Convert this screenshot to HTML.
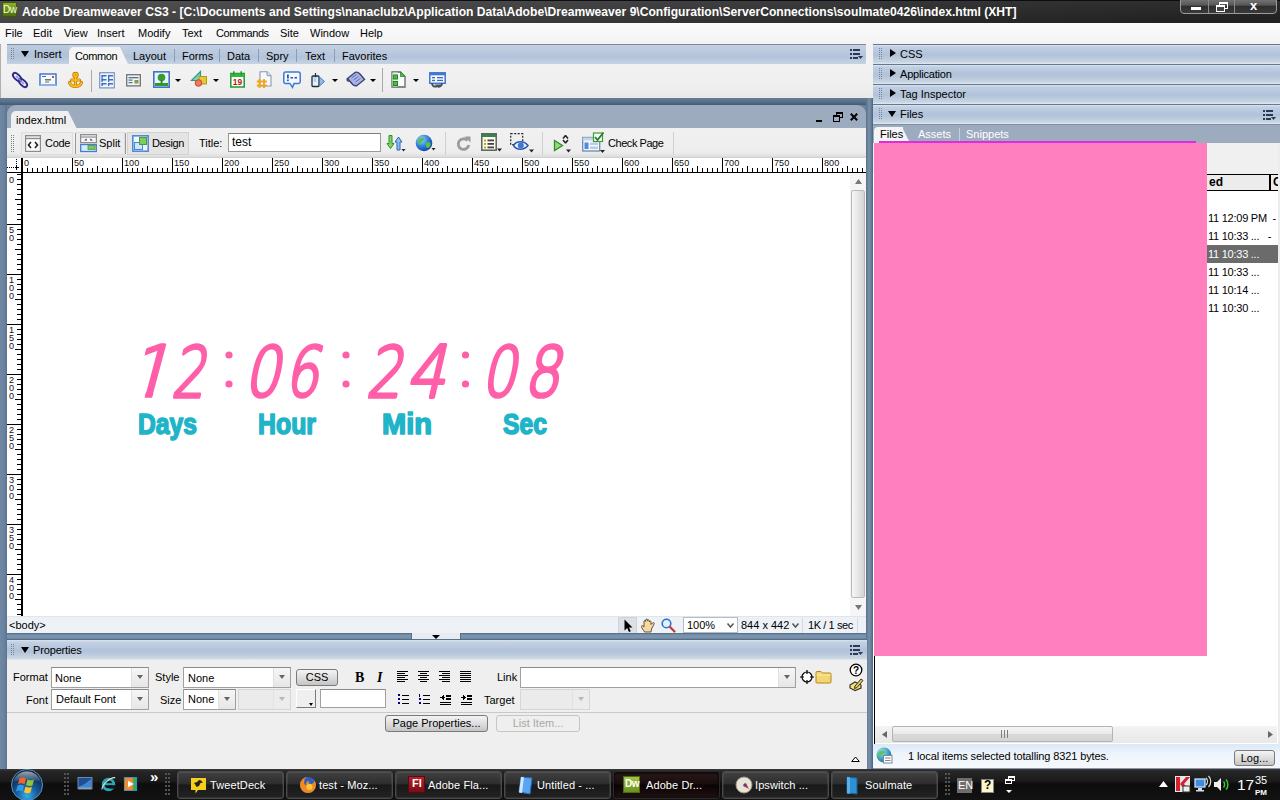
<!DOCTYPE html>
<html><head><meta charset="utf-8"><title>test</title>
<style>
*{box-sizing:border-box;margin:0;padding:0}
html,body{width:1280px;height:800px;overflow:hidden}
body{position:relative;background:#6a829d;font-family:"Liberation Sans",sans-serif;font-size:11px;color:#000;line-height:13px}
.a{position:absolute}
.t{position:absolute;white-space:nowrap;line-height:13px}
svg{position:absolute;overflow:visible}
.grip{position:absolute;width:4px;background-image:radial-gradient(circle at 0.5px 0.5px,#76859a 0.6px,transparent 0.7px);background-size:2px 2px}
.tri-d{position:absolute;width:0;height:0;border-left:4.5px solid transparent;border-right:4.5px solid transparent;border-top:6px solid #000}
.tri-r{position:absolute;width:0;height:0;border-top:4.5px solid transparent;border-bottom:4.5px solid transparent;border-left:6px solid #000}
.dd{position:absolute;width:0;height:0;border-left:3px solid transparent;border-right:3px solid transparent;border-top:3px solid #000}
.vsep{position:absolute;width:1px;background:#a9a9a9}

#band1{left:0;top:98px;width:873px;height:7px;background:linear-gradient(#677d97,#5a718b 50%,#435a75)}
#band2{left:0;top:633px;width:873px;height:7px;background:linear-gradient(#4f657f 0,#64809b 1px,#7a93af 2px,#7a93af 5px,#61788f 6px,#4d637d 7px)}
#vsepr{left:866px;top:98px;width:7px;height:672px;background:linear-gradient(90deg,#5b728c,#7990aa 45%,#6a819c 70%,#4d647e)}
#lstrip{left:0;top:105px;width:7px;height:665px;background:linear-gradient(90deg,#6f88a4,#6a829d 60%,#5a7490)}
/* title bar */
#titlebar{left:0;top:0;width:1280px;height:23px;background:linear-gradient(#0c0c18 0,#0c0c18 1px,rgba(255,255,255,.05) 1px,rgba(0,0,0,.06) 23px),linear-gradient(90deg,#484848,#3d3d3d 40%,#292929 75%,#202020)}
#titletext{left:22px;top:5px;color:#fff;font-weight:bold;font-size:12.12px;line-height:15px}
#dwicon{left:2px;top:2px;width:15px;height:15px;background:linear-gradient(#8fb02c,#4f6d10);border:1px solid #41580c;color:#f4ffd8;font-size:10px;font-weight:normal;line-height:14px;text-align:center;letter-spacing:-0.5px}
#winctl{left:1180px;top:-2px;width:97px;height:16px;border:1px solid #9a9a9a;border-radius:0 0 4px 4px;background:linear-gradient(#777,#555 45%,#2e2e2e 50%,#3a3a3a)}
#winctl i{position:absolute;top:0;width:1px;height:14px;background:#8a8a8a}
#menubar{left:0;top:23px;width:1280px;height:21px;background:linear-gradient(#fbfbfb,#f3f3f3)}
#menubar .t{top:4px}
/* insert bar */
#insertbar{left:0;top:44px;width:873px;border-left:1px solid #b0b0b0;height:54px;background:linear-gradient(#f2f2f2 20px,#efefef 42px,#e9e9e9)}
#inserttabs{left:6px;top:0;width:859px;height:20px;background:linear-gradient(#7b8b9f 0,#7b8b9f 1px,#c4d1e3 1px,#b3c4da 65%,#c6d3e3)}
#insertlbl{left:0;top:1px;width:62px;height:18px;background:linear-gradient(#bdcce0,#b0c1d8 60%,#c0cee0)}
#commontab{left:62px;top:3px;width:51px;height:17px;background:#f4f4f4;border-radius:5px 0 0 0}
#commontab:after{content:"";position:absolute;right:-8px;top:0;width:0;height:0;border-bottom:17px solid #f4f4f4;border-right:8px solid transparent}
.tabsep{position:absolute;top:5px;width:1px;height:13px;background:#8d9db3}
#inserttabs .t{top:6px}
/* document window */
#doc{left:7px;top:105px;width:859px;height:528px;background:#9dabbf;border-radius:9px 9px 0 0;overflow:hidden}
#doctab{left:4px;top:6px;width:57px;height:18px;background:#efefef;border-radius:5px 0 0 0}
#doctab:after{content:"";position:absolute;right:-9px;top:0;width:0;height:0;border-bottom:18px solid #efefef;border-right:9px solid transparent}
#doctool{left:0;top:23px;width:860px;height:30px;background:linear-gradient(#f1f1f1,#ededed 80%,#e2e2e2 93%,#cfcfcf)}
.tbtn{position:absolute;top:4px;height:23px;border:1px solid #dedede;background:#ececec}
.tbtn.on{background:#e4e4e4;border-color:#d2d2d2}
#doctool .t{top:9px;font-size:11px;line-height:13px}
#titleinp{left:221px;top:5px;width:153px;height:19px;background:#fff;border:1px solid #9a9a9a;border-top-color:#7d7d7d}
#hruler{left:0;top:53px;width:860px;height:15px;background:#fff}
#vruler{left:0;top:68px;width:15px;height:443px;background:#fff}
.rl{position:absolute;font-size:9.7px;line-height:9px;color:#111;transform:scaleX(.94);transform-origin:0 0}
#canvas{left:16px;top:68px;width:828px;height:443px;background:#fff}
#vscroll{left:843px;top:68px;width:17px;height:443px;background:#f5f5f5}
#vthumb{left:1px;top:17px;width:14px;height:408px;background:linear-gradient(90deg,#f7f7f7,#e6e6e6 50%,#d3d3d3);border:1px solid #b9b9b9;border-radius:2px}
#docstatus{left:0;top:511px;width:860px;height:17px;background:#eef2f7;border-top:1px solid #dfe5ee}
#docstatus .t{top:2px;font-size:11px}
#hticks{left:15px;top:0;width:845px;height:14px;background:
 linear-gradient(90deg,#000 1px,transparent 1px) 0 0/50px 14px repeat-x,
 linear-gradient(90deg,#000 1px,transparent 1px) 0 8px/25px 6px repeat-x,
 linear-gradient(90deg,#000 1px,transparent 1px) 0 10px/5px 4px repeat-x}
#hline{left:0;top:14px;width:860px;height:1px;background:#000}
#hvline{left:14px;top:0;width:2px;height:15px;background:#000}
#vticks{left:0;top:1px;width:14px;height:442px;background:
 linear-gradient(#000 1px,transparent 1px) 0 0/14px 50px repeat-y,
 linear-gradient(#000 1px,transparent 1px) 8px 0/6px 25px repeat-y,
 linear-gradient(#000 1px,transparent 1px) 10px 0/4px 5px repeat-y}
#vline{left:14px;top:0;width:2px;height:443px;background:#000}
/* properties */
#props{left:7px;top:640px;width:860px;height:130px;background:#efefef}
#propshead{left:0;top:0;width:860px;height:20px;background:linear-gradient(#dbe4ef 0,#c3d1e3 2px,#b0c2d9 11px,#c8d4e3 18px,#e4eaf1 20px)}
#props .t{font-size:11px}
.sel{position:absolute;height:21px;background:#fff;border:1px solid #a0a0a0;border-top-color:#8a8a8a}
.sel:after{content:"";position:absolute;right:0;top:0;width:16px;height:19px;background:linear-gradient(#f6f6f6,#e6e6e6);border-left:1px solid #e0e0e0}
.sel:before{content:"";position:absolute;right:5px;top:7px;width:0;height:0;border-left:3px solid transparent;border-right:3px solid transparent;border-top:4px solid #666;z-index:2}
.sel.dis{background:#ebebeb;border-color:#d6d6d6}
.sel.dis:after{background:#ececec;border-left-color:#e2e2e2}
.sel.dis:before{border-top-color:#b8b8b8}
.btn{position:absolute;height:17px;border:1px solid #7a7a7a;border-radius:3px;background:linear-gradient(#f4f4f4,#dcdcdc 55%,#c4c4c4);text-align:center;font-size:11px;line-height:15px}
.btn.dis{border-color:#c6c6c6;background:#efefef;color:#a8a8a8}
.inp{position:absolute;background:#fff;border:1px solid #a0a0a0;border-top-color:#8a8a8a}
#propsline{left:0;top:72px;width:860px;height:1px;background:#c9c9c9}
/* right panels */
#right{left:873px;top:44px;width:407px;height:725px;background:#fff}
.phead{position:absolute;left:0;width:408px;height:20px;background:linear-gradient(#66788f 0,#66788f 1px,#dbe4ef 1px,#c1cfe2 3px,#b0c2d9 11px,#c8d4e3 18px,#e2e9f1 20px)}
.phead .t{left:27px;top:4px}
#ftabs{left:0;top:80px;width:408px;height:19px;background:linear-gradient(#7d8da3 0,#7d8da3 1px,#9dabbf 1px)}
#ftab{left:1px;top:3px;width:29px;height:16px;background:#f4f4f4;border-radius:4px 0 0 0}
#ftab:after{content:"";position:absolute;right:-7px;top:0;width:0;height:0;border-bottom:16px solid #f4f4f4;border-right:8px solid transparent}
#ftabs .t{top:4px}
#fbar{left:0;top:99px;width:408px;height:31px;background:#f0f0f0}
#fcolhead{left:2px;top:130px;width:403px;height:17px;background:#ececec;border-top:1px solid #000;border-bottom:1px solid #000}
#magenta{left:879px;top:141px;width:317px;height:2px;background:#e12be0}
#pink{left:874px;top:143px;width:333px;height:513px;background:#ff7fbf}
.frow{position:absolute;left:334px;width:71px;height:18px}
.frow .t{left:1px;top:3px;font-size:11px;letter-spacing:-0.25px}
#fsel{background:#6b6b6b;color:#fff}
#hscroll{left:2px;top:682px;width:402px;height:17px;background:linear-gradient(#f3f3f3,#ededed 50%,#e8e8e8)}
#hthumb{left:17px;top:0px;width:221px;height:16px;border:1px solid #b4b4b4;border-radius:2px;background:linear-gradient(#f6f6f6,#eaeaea 48%,#d9d9d9 52%,#d4d4d4)}
#fstatus{left:0;top:700px;width:408px;height:25px;background:linear-gradient(#dbe8f5,#eef4fb 40%,#f5f9fd);border-bottom:1px solid #8b97a6}
/* taskbar */
#taskbar{left:0;top:769px;width:1280px;height:31px;background:linear-gradient(#3d3d3d 0,#262626 2px,#1b1b1b 12px,#0d0d0d 15px,#121212 31px);font-family:"Liberation Sans",sans-serif}
.tb{position:absolute;top:2px;width:107px;height:28px;border:1px solid #4a4a4a;border-radius:3px;background:linear-gradient(#414141,#2d2d2d 45%,#191919 50%,#222);box-shadow:inset 0 0 0 1px rgba(255,255,255,.08)}
.tb .t{left:32px;top:7px;color:#fff;font-size:11px;line-height:13px;letter-spacing:0.1px}
.tb.act{background:linear-gradient(#2a1a1a,#1a0d0d 45%,#0b0404 50%,#1f1010);border-color:#2a2a2a;box-shadow:inset 0 1px 3px #000}
.dots{position:absolute;width:5px;height:24px;top:4px;background-image:radial-gradient(circle at 1px 1px,#555 0.700px,transparent 0.900px);background-size:3px 4px}
</style></head><body>
<div class="a" id="titlebar">
 <div class="a" id="dwicon">Dw</div>
 <div class="t" id="titletext">Adobe Dreamweaver CS3 - [C:\Documents and Settings\nanaclubz\Application Data\Adobe\Dreamweaver 9\Configuration\ServerConnections\soulmate0426\index.html (XHT]</div>
 <div class="a" id="winctl"><i style="left:27px"></i><i style="left:53px"></i>
  <div class="a" style="left:10px;top:8px;width:10px;height:3px;background:#fff"></div>
  <div class="a" style="left:38px;top:3px;width:9px;height:7px;border:1.5px solid #fff;border-top-width:2px"></div>
  <div class="a" style="left:35px;top:6px;width:9px;height:7px;border:1.5px solid #fff;border-top-width:2px;background:#444"></div>
  <div class="t" style="left:69px;top:0px;color:#fff;font-weight:bold;font-size:13px;line-height:14px">x</div>
 </div>
</div>
<div class="a" id="menubar">
<div class="t" style="left:5px">File</div><div class="t" style="left:33px">Edit</div><div class="t" style="left:64px">View</div><div class="t" style="left:97px">Insert</div><div class="t" style="left:138px">Modify</div><div class="t" style="left:182px">Text</div><div class="t" style="left:216px;letter-spacing:-0.45px">Commands</div><div class="t" style="left:280px">Site</div><div class="t" style="left:310px">Window</div><div class="t" style="left:360px">Help</div>
</div>
<div class="a" id="insertbar">
 <div class="a" id="inserttabs">
  <div class="a" id="insertlbl"></div>
  <div class="grip" style="left:4px;top:4px;height:12px"></div>
  <div class="tri-d" style="left:14px;top:7px"></div>
  <div class="t" style="left:27px;top:4px">Insert</div>
  <div class="a" id="commontab"></div>
  <div class="t" style="left:68px;letter-spacing:-0.4px">Common</div>
  <div class="t" style="left:126px">Layout</div><div class="tabsep" style="left:167px"></div>
  <div class="t" style="left:175px">Forms</div><div class="tabsep" style="left:212px"></div>
  <div class="t" style="left:220px">Data</div><div class="tabsep" style="left:251px"></div>
  <div class="t" style="left:259px">Spry</div><div class="tabsep" style="left:289px"></div>
  <div class="t" style="left:298px">Text</div><div class="tabsep" style="left:327px"></div>
  <div class="t" style="left:335px">Favorites</div>
  <svg style="left:843px;top:4px" width="14" height="12" viewBox="0 0 14 12"><g fill="#2a3a55"><rect x="0" y="1" width="2" height="2"/><rect x="3" y="1" width="7" height="2"/><rect x="0" y="5" width="2" height="2"/><rect x="3" y="5" width="7" height="2"/><rect x="0" y="9" width="2" height="2"/><rect x="3" y="9" width="5" height="2"/><path d="M8 8h5l-2.5 3z"/></g></svg>
 </div>
 <div class="a" id="inserticons" style="left:-1px;top:-44px;width:0;height:0">
 <!-- hyperlink -->
 <svg style="left:11px;top:71px" width="18" height="18" viewBox="0 0 18 18"><g fill="none" stroke="#2f2a8c" stroke-width="2"><ellipse cx="6" cy="6" rx="5" ry="2.6" transform="rotate(45 6 6)"/><ellipse cx="12" cy="12" rx="5" ry="2.6" transform="rotate(45 12 12)"/></g><path d="M5 5l8 8" stroke="#8d8adf" stroke-width="1.5"/></svg>
 <!-- email -->
 <svg style="left:39px;top:73px" width="18" height="14" viewBox="0 0 18 14"><rect x="1" y="1" width="16" height="11" fill="#f4f8ff" stroke="#3c6fc4" stroke-width="1.4"/><rect x="1" y="11" width="16" height="2" fill="#8fb2e6"/><rect x="3" y="3" width="4" height="1" fill="#3c6fc4"/><rect x="13" y="3" width="2" height="2" fill="#c8503c"/><rect x="6" y="6" width="6" height="1.5" fill="#6a7f5a"/><rect x="6" y="8.5" width="4" height="1" fill="#6a7f5a"/></svg>
 <!-- anchor -->
 <svg style="left:67px;top:71px" width="17" height="18" viewBox="0 0 17 18"><g fill="none" stroke="#c97d00" stroke-width="3.2" stroke-linecap="round"><circle cx="8.5" cy="4" r="1.6"/><path d="M8.5 6v9M4.5 9h8M2.5 11.5c1 3.2 3.5 4 6 4s5-.8 6-4"/></g><g fill="none" stroke="#ffc321" stroke-width="1.5" stroke-linecap="round"><circle cx="8.5" cy="4" r="1.6"/><path d="M8.5 6v9M4.5 9h8M2.5 11.5c1 3.2 3.5 4 6 4s5-.8 6-4"/></g></svg>
 <div class="vsep" style="left:91px;top:70px;height:22px"></div>
 <!-- table -->
 <svg style="left:99px;top:72px" width="16" height="17" viewBox="0 0 16 17"><rect x="0.7" y="0.7" width="14.6" height="15.2" fill="#eef4fd" stroke="#7c95b8" stroke-width="1.2"/><g fill="#3d6dc0"><rect x="2.5" y="3" width="5" height="1.5"/><rect x="9" y="3" width="5" height="1.5"/><rect x="2.5" y="7" width="5" height="1.5"/><rect x="9" y="7" width="5" height="1.5"/><rect x="2.5" y="11" width="5" height="1.5"/><rect x="9" y="11" width="5" height="1.5"/><rect x="2.5" y="3" width="1.3" height="4"/><rect x="9" y="3" width="1.3" height="4"/><rect x="2.5" y="7" width="1.3" height="3"/><rect x="9" y="7" width="1.3" height="3"/><rect x="2.5" y="11" width="1.3" height="3"/><rect x="9" y="11" width="1.3" height="3"/></g></svg>
 <!-- div -->
 <svg style="left:126px;top:74px" width="15" height="13" viewBox="0 0 15 13"><rect x="0.7" y="0.7" width="13.6" height="11.2" fill="#f2f4ee" stroke="#6f7378" stroke-width="1.3"/><g fill="#55708c"><rect x="2.5" y="3" width="10" height="1.3"/><rect x="2.5" y="5.5" width="4" height="1.2"/><rect x="2.5" y="8" width="4" height="1.2"/></g><rect x="8.5" y="6" width="4" height="3.5" fill="#7d9a62"/></svg>
 <!-- image -->
 <svg style="left:153px;top:71px" width="17" height="17" viewBox="0 0 17 17"><rect x="0.8" y="0.8" width="15.4" height="15.4" fill="#e9f3fb" stroke="#3f74c9" stroke-width="1.6"/><rect x="2" y="12" width="13" height="3" fill="#2f9a2a"/><circle cx="8.5" cy="6.5" r="3.8" fill="#3a9a33"/><rect x="7.7" y="9" width="1.8" height="3.5" fill="#2d7d2a"/></svg>
 <div class="dd" style="left:175px;top:79px"></div>
 <!-- media -->
 <svg style="left:190px;top:70px" width="18" height="18" viewBox="0 0 18 18"><path d="M1.5 10.5L10.5 1.5v9z" fill="#7fd1c0" stroke="#2e9d78" stroke-width="1.2"/><rect x="9" y="6.5" width="7.5" height="7.5" fill="#e7c83a" stroke="#b59a1c" stroke-width="1"/><circle cx="8.5" cy="13" r="3.3" fill="#f07a5c" stroke="#c8452f" stroke-width="1"/></svg>
 <div class="dd" style="left:213px;top:79px"></div>
 <!-- date -->
 <svg style="left:230px;top:71px" width="15" height="17" viewBox="0 0 15 17"><rect x="0.8" y="2.5" width="13.4" height="13.5" fill="#fff" stroke="#1f9a2c" stroke-width="1.5"/><rect x="0.8" y="2.5" width="13.4" height="3.5" fill="#35b544"/><rect x="3" y="0.3" width="1.6" height="3.5" fill="#1f9a2c"/><rect x="10.4" y="0.3" width="1.6" height="3.5" fill="#1f9a2c"/><text x="7.5" y="14.2" font-family="Liberation Sans, sans-serif" font-weight="bold" font-size="8.5" text-anchor="middle" fill="#b01818">19</text></svg>
 <!-- ssi -->
 <svg style="left:256px;top:71px" width="17" height="18" viewBox="0 0 17 18"><path d="M4 0.7h7l4 4V15H4z" fill="#f6f8fc" stroke="#8a98b3" stroke-width="1.1"/><path d="M11 0.7v4h4" fill="#dfe6f3" stroke="#8a98b3" stroke-width="1"/><g stroke="#f2a41c" stroke-width="1.8"><path d="M3.5 8v9M8 8v9M0.8 10.5h10M0.8 14.5h10"/></g></svg>
 <!-- comment -->
 <svg style="left:283px;top:71px" width="18" height="18" viewBox="0 0 18 18"><path d="M2.5 1h13a1.7 1.7 0 0 1 1.7 1.7v8a1.7 1.7 0 0 1-1.7 1.7H11l-1.5 4-2.6-4H2.5A1.7 1.7 0 0 1 .8 10.700v-8A1.7 1.700 0 0 1 2.500 1z" fill="#f4f9ff" stroke="#3f78d3" stroke-width="1.5"/><rect x="4" y="3.5" width="1.8" height="4" fill="#2a55a8"/><rect x="4" y="8.500" width="1.8" height="1.600" fill="#2a55a8"/><rect x="7.5" y="6" width="2.500" height="1.500" fill="#2a55a8"/><rect x="11.500" y="6" width="2.500" height="1.500" fill="#2a55a8"/></svg>
 <!-- head -->
 <svg style="left:311px;top:72px" width="15" height="16" viewBox="0 0 15 16"><rect x="1" y="4" width="7" height="10.500" rx="1" fill="#eaf2fa" stroke="#1f2c3a" stroke-width="1.300"/><path d="M4.500 1v5" stroke="#1f2c3a" stroke-width="1.200"/><rect x="2.500" y="5" width="3" height="5" fill="#b5d3ee"/><path d="M8.500 5l5 4.500-5 4.500z" fill="#8ebce6" stroke="#4a7db8" stroke-width="1"/></svg>
 <div class="dd" style="left:332px;top:79px"></div>
 <!-- script -->
 <svg style="left:346px;top:71px" width="20" height="17" viewBox="0 0 20 17"><path d="M1.500 7.500L9 1.500c2-1 3.500 0 5 1.500l4.500 5.500-7.500 6c-2 .8-3.500 0-4.500-1.200z" fill="#a9b4e6" stroke="#3b4370" stroke-width="1.400"/><path d="M5.500 7l5-3.500M7.500 9l5-3.500M9.500 11l5-3.500" stroke="#6470b5" stroke-width="1"/><path d="M1.500 7.500c-1 1.500 0 3 1.500 2.500" fill="none" stroke="#3b4370" stroke-width="1.400"/></svg>
 <div class="dd" style="left:370px;top:79px"></div>
 <div class="vsep" style="left:382px;top:68px;height:24px"></div>
 <!-- templates -->
 <svg style="left:391px;top:71px" width="15" height="17" viewBox="0 0 15 17"><path d="M1 1h8.500l4.500 4.500V16H1z" fill="#fbfbfb" stroke="#5d6b63" stroke-width="1.300"/><path d="M9.500 1v4.500H14z" fill="#51c04d" stroke="#2a8a2c" stroke-width="0.800"/><rect x="1.500" y="1.500" width="5" height="14" fill="#dff1db"/><rect x="2.300" y="4" width="4.200" height="4" fill="#49c043" stroke="#1f8526" stroke-width="1"/><rect x="2.300" y="10.500" width="4.200" height="4" fill="#49c043" stroke="#1f8526" stroke-width="1"/></svg>
 <div class="dd" style="left:413px;top:79px"></div>
 <!-- tag chooser -->
 <svg style="left:429px;top:72px" width="17" height="17" viewBox="0 0 17 17"><rect x="0.800" y="0.800" width="15.400" height="10.500" fill="#f4f9ff" stroke="#3f78d3" stroke-width="1.500"/><rect x="0.800" y="0.800" width="15.400" height="2.500" fill="#3f78d3"/><g fill="#3f6bb0"><rect x="3" y="5" width="3" height="1.300"/><rect x="8" y="5" width="6" height="1.300"/><rect x="3" y="7.800" width="3" height="1.300"/><rect x="8" y="7.800" width="6" height="1.300"/></g><path d="M3 11c0 3 2 4 5 3.500M13 11c0 3-2 4-4 3.500" fill="none" stroke="#4a4f57" stroke-width="2"/><path d="M5.500 12.500l3.500 3 3.500-3z" fill="#4a4f57"/></svg>
</div>
</div>
<div class="a" id="band1"></div><div class="a" id="band2"></div><div class="a" id="lstrip"></div><div class="a" id="vsepr"></div>
<div class="a" id="doc">
 <div class="a" id="doctab"></div>
 <div class="t" style="left:9px;top:9px;font-size:11px;line-height:13px">index.html</div>
 <!-- doc window controls -->
 <div class="a" style="left:809px;top:15px;width:6px;height:2px;background:#000"></div>
 <div class="a" style="left:829px;top:7px;width:7px;height:6px;border:1px solid #000;border-top-width:2px"></div>
 <div class="a" style="left:826px;top:10px;width:7px;height:7px;border:1px solid #000;border-top-width:2px;background:#9dabbf"></div>
 <svg style="left:843px;top:8px" width="8" height="8" viewBox="0 0 8 8"><path d="M0.800 0.800l6.400 6.400M7.200 0.800l-6.400 6.400" stroke="#000" stroke-width="2"/></svg>
 <div class="a" id="doctool">
  <div class="grip" style="left:4px;top:7px;height:17px"></div>
  <div class="tbtn" style="left:14px;width:52px"></div>
  <div class="tbtn" style="left:68px;width:50px"></div>
  <div class="tbtn on" style="left:120px;width:62px"></div>
  <div class="a" style="left:68px;top:5px;width:1px;height:21px;background:#9a9a9a"></div><div class="a" style="left:118px;top:5px;width:1px;height:21px;background:#9a9a9a"></div>
  <!-- code icon -->
  <svg style="left:18px;top:7px" width="16" height="17" viewBox="0 0 16 17"><rect x="0.6" y="0.6" width="14.8" height="15.8" fill="#fbfbfb" stroke="#8c8c8c" stroke-width="1.2"/><rect x="0.6" y="0.6" width="14.8" height="3" fill="#e1e1e1" stroke="#8c8c8c" stroke-width="1.2"/><path d="M6 7L3.500 10 6 13M10 7l2.500 3-2.500 3" fill="none" stroke="#222" stroke-width="1.600"/></svg>
  <div class="t" style="left:38px;letter-spacing:-0.3px">Code</div>
  <!-- split icon -->
  <svg style="left:73px;top:6px" width="17" height="18" viewBox="0 0 17 18"><rect x="0.6" y="0.6" width="15.800" height="8" fill="#f6f6f6" stroke="#8c8c8c" stroke-width="1.200"/><rect x="0.6" y="0.6" width="15.800" height="2.500" fill="#dcdcdc" stroke="#8c8c8c" stroke-width="1"/><path d="M6.500 4.500L4 6.500h3zM10.500 4.500l2.500 2h-3z" fill="#444"/><rect x="0.700" y="10.500" width="15.600" height="7" fill="#d9ecfb" stroke="#3f7fd0" stroke-width="1.300"/><rect x="8" y="11.500" width="7" height="4" fill="#7fc561" stroke="#4c9a3a" stroke-width="0.800"/></svg>
  <div class="t" style="left:92px">Split</div>
  <!-- design icon -->
  <svg style="left:125px;top:7px" width="17" height="17" viewBox="0 0 17 17"><rect x="0.800" y="0.800" width="15.400" height="15.400" fill="#eef6fd" stroke="#4a86d6" stroke-width="1.500"/><rect x="2.500" y="7.500" width="8" height="7" fill="#cfe6fb" stroke="#4a86d6" stroke-width="1"/><rect x="7.500" y="2.500" width="7" height="7" fill="#7fcb5c" stroke="#4c9a3a" stroke-width="1"/></svg>
  <div class="t" style="left:145px;letter-spacing:-0.35px">Design</div>
  <div class="t" style="left:192px">Title:</div>
  <div class="a" id="titleinp"></div>
  <div class="t" style="left:225px;top:8px;font-size:12px">test</div>
  <!-- file management -->
  <svg style="left:380px;top:6px" width="20" height="18" viewBox="0 0 20 18"><path d="M2 1.500h3v8h2L3.500 14.500 0 9.500h2z" fill="#7fd36b" stroke="#2f8f2a" stroke-width="1"/><path d="M10 16h3V8h2L11.500 3 8 8h2z" fill="#8fc1f0" stroke="#2f67b5" stroke-width="1"/><path d="M14.500 15h4l-2 2.500z" fill="#222"/></svg>
  <!-- globe -->
  <svg style="left:408px;top:6px" width="22" height="19" viewBox="0 0 22 19"><defs><radialGradient id="gl" cx="35%" cy="30%" r="75%"><stop offset="0" stop-color="#9fd4ff"/><stop offset="0.550" stop-color="#2f7fdc"/><stop offset="1" stop-color="#123f9a"/></radialGradient></defs><circle cx="9" cy="9" r="8.300" fill="url(#gl)"/><path d="M4 5c2-1.500 4-1.800 5-.5s-1 2.500-2.500 3.500S5 11.500 4 10.500 3 6.500 4 5zM11 9c1.500-1 4-1 4.500.5s-1 4-2.500 4.500-3-3.500-2-5z" fill="#58c04a"/><path d="M16.500 14h4l-2 2.500z" fill="#222"/></svg>
  <div class="vsep" style="left:438px;top:4px;height:23px;background:#d0d0d0"></div>
  <!-- refresh -->
  <svg style="left:448px;top:7px" width="17" height="17" viewBox="0 0 17 17"><path d="M12.500 5.500A5.300 5.300 0 1 0 13.800 10" fill="none" stroke="#9b9b9b" stroke-width="2.800"/><path d="M9.500 1.500h6v6z" fill="#9b9b9b"/></svg>
  <!-- view options -->
  <svg style="left:474px;top:5px" width="22" height="20" viewBox="0 0 22 20"><rect x="0.800" y="0.800" width="14.400" height="16.400" fill="#fbfbf3" stroke="#52664f" stroke-width="1.500"/><rect x="0.800" y="0.800" width="14.400" height="3.200" fill="#3e7f4e"/><g fill="#c9a51c"><rect x="3" y="6.500" width="2" height="2"/><rect x="3" y="10" width="2" height="2"/><rect x="3" y="13.500" width="2" height="2"/></g><g fill="#444"><rect x="6.500" y="6.500" width="6.500" height="1.800"/><rect x="6.500" y="10" width="6.500" height="1.800"/><rect x="6.500" y="13.500" width="6.500" height="1.800"/></g><path d="M16 15.500h5l-2.500 3z" fill="#222"/></svg>
  <!-- visual aids -->
  <svg style="left:503px;top:5px" width="25" height="21" viewBox="0 0 25 21"><rect x="0.700" y="0.700" width="12" height="11" fill="none" stroke="#222" stroke-width="1.200" stroke-dasharray="2 1.500"/><path d="M3.500 12.500c3-5 10.500-5 14.500 0-4 5-11.500 5-14.500 0z" fill="#eaf3ff" stroke="#2c57b0" stroke-width="1.500"/><circle cx="10.800" cy="12.500" r="3" fill="#3d78d8"/><path d="M19 16.500h5l-2.500 3z" fill="#222"/></svg>
  <div class="vsep" style="left:535px;top:4px;height:23px;background:#d0d0d0"></div>
  <!-- validate -->
  <svg style="left:546px;top:6px" width="22" height="20" viewBox="0 0 22 20"><path d="M1.500 6.500l8 5-8 5z" fill="#8fdc7a" stroke="#2f8f2a" stroke-width="1.300"/><path d="M10 4.500l2.500-3M12.500 1.500l2.500 3M10 6l2.500 3M15 6l-2.500 3" stroke="#222" stroke-width="1.500" fill="none"/><path d="M13 15.500h5l-2.500 3z" fill="#222"/></svg>
  <!-- check page -->
  <svg style="left:575px;top:4px" width="25" height="22" viewBox="0 0 25 22"><rect x="0.700" y="5.500" width="17" height="13.500" fill="#f2f7fd" stroke="#6d89ad" stroke-width="1.300"/><rect x="0.700" y="5.500" width="17" height="3" fill="#c5d4e6"/><rect x="2.500" y="10.500" width="4" height="6.500" fill="#4f8ade"/><rect x="8" y="10.500" width="8" height="2.500" fill="#b9cde6"/><rect x="8" y="14.500" width="8" height="2.500" fill="#b9cde6"/><rect x="11.500" y="1" width="9" height="8.500" fill="#f9fff5" stroke="#3d9b3a" stroke-width="1.200"/><path d="M13 5l2.500 3L21.500 0.500" fill="none" stroke="#2a7f2a" stroke-width="1.800"/><path d="M18 18h5l-2.500 3z" fill="#222"/></svg>
  <div class="t" style="left:601px;letter-spacing:-0.45px">Check Page</div>
  <div class="vsep" style="left:666px;top:4px;height:23px;background:#d0d0d0"></div>
 </div>
 <div class="a" id="hruler">
  <div class="a" id="hticks"></div><div class="a" id="hline"></div><div class="a" id="hvline"></div>
  <svg style="left:0;top:1px" width="13" height="12" viewBox="0 0 13 12" shape-rendering="crispEdges"><g fill="#000"><rect x="0" y="8" width="1" height="1"/><rect x="2" y="8" width="1" height="1"/><rect x="4" y="8" width="1" height="1"/><rect x="6" y="8" width="1" height="1"/><rect x="8" y="8" width="4" height="1"/><rect x="9" y="0" width="1" height="1"/><rect x="9" y="2" width="1" height="1"/><rect x="9" y="4" width="1" height="1"/><rect x="9" y="6" width="1" height="5"/></g></svg>
  <div class="rl" style="left:17px;top:0px">0</div><div class="rl" style="left:67px;top:0px">50</div><div class="rl" style="left:117px;top:0px">100</div><div class="rl" style="left:167px;top:0px">150</div><div class="rl" style="left:217px;top:0px">200</div><div class="rl" style="left:267px;top:0px">250</div><div class="rl" style="left:317px;top:0px">300</div><div class="rl" style="left:367px;top:0px">350</div><div class="rl" style="left:417px;top:0px">400</div><div class="rl" style="left:467px;top:0px">450</div><div class="rl" style="left:517px;top:0px">500</div><div class="rl" style="left:567px;top:0px">550</div><div class="rl" style="left:617px;top:0px">600</div><div class="rl" style="left:667px;top:0px">650</div><div class="rl" style="left:717px;top:0px">700</div><div class="rl" style="left:767px;top:0px">750</div><div class="rl" style="left:817px;top:0px">800</div>
 </div>
 <div class="a" id="vruler"><div class="a" id="vticks"></div><div class="a" style="left:0;top:1px;width:10px;height:1px;background:#fff"></div><div class="a" id="vline"></div><div class="rl" style="left:2px;top:2px">0</div><div class="rl" style="left:2px;top:52px">5</div><div class="rl" style="left:2px;top:60px">0</div><div class="rl" style="left:2px;top:102px">1</div><div class="rl" style="left:2px;top:110px">0</div><div class="rl" style="left:2px;top:118px">0</div><div class="rl" style="left:2px;top:152px">1</div><div class="rl" style="left:2px;top:160px">5</div><div class="rl" style="left:2px;top:168px">0</div><div class="rl" style="left:2px;top:202px">2</div><div class="rl" style="left:2px;top:210px">0</div><div class="rl" style="left:2px;top:218px">0</div><div class="rl" style="left:2px;top:252px">2</div><div class="rl" style="left:2px;top:260px">5</div><div class="rl" style="left:2px;top:268px">0</div><div class="rl" style="left:2px;top:302px">3</div><div class="rl" style="left:2px;top:310px">0</div><div class="rl" style="left:2px;top:318px">0</div><div class="rl" style="left:2px;top:352px">3</div><div class="rl" style="left:2px;top:360px">5</div><div class="rl" style="left:2px;top:368px">0</div><div class="rl" style="left:2px;top:402px">4</div><div class="rl" style="left:2px;top:410px">0</div><div class="rl" style="left:2px;top:418px">0</div></div>
 <div class="a" id="canvas"></div>
 <div class="a" id="vscroll">
  <div class="a" id="vthumb"></div>
  <svg style="left:5px;top:6px" width="7" height="5" viewBox="0 0 7 5"><path d="M0 5h7L3.500 0z" fill="#777"/></svg>
  <svg style="left:5px;top:432px" width="7" height="5" viewBox="0 0 7 5"><path d="M0 0h7L3.500 5z" fill="#777"/></svg>
 </div>
 <div class="a" id="docstatus">
  <div class="t" style="left:2px">&lt;body&gt;</div>
  <div class="a" style="left:611px;top:0;width:19px;height:17px;background:#dde1e7;border:1px solid #cfd4dc"></div>
  <svg style="left:617px;top:2px" width="9" height="14" viewBox="0 0 9 14"><path d="M0.500 0.500v11l2.700-2.500 1.800 4 1.800-.800-1.800-3.800H8.500z" fill="#000"/></svg>
  <svg style="left:634px;top:1px" width="15" height="15" viewBox="0 0 15 15"><path d="M3.500 14c-1-2-3-4-3-5.500S2 7.500 3 9V3.500c0-1.300 1.700-1.300 1.700 0V2c0-1.300 1.800-1.300 1.800 0v.800c0-1.300 1.800-1.300 1.800 0V4c0-1.200 1.700-1.200 1.700 0v2.500l1.500-1.500c1-1 2.300 0 1.500 1.200L10.500 11l-.500 3z" fill="#f3d9a4" stroke="#5a4320" stroke-width="0.900"/></svg>
  <svg style="left:654px;top:1px" width="15" height="15" viewBox="0 0 15 15"><circle cx="5.500" cy="5.500" r="4.300" fill="#e4f1ff" stroke="#2f6fd0" stroke-width="1.600"/><path d="M8.800 8.800l4.700 4.700" stroke="#c43a2a" stroke-width="2.200" stroke-linecap="round"/></svg>
  <div class="a" style="left:676px;top:0;width:55px;height:16px;background:#fff;border:1px solid #b5bcc6"></div>
  <div class="t" style="left:680px">100%</div>
  <svg style="left:720px;top:6px" width="7" height="5" viewBox="0 0 7 5"><path d="M0.500 0.500l3 3.500 3-3.500" fill="none" stroke="#555" stroke-width="1.500"/></svg>
  <div class="t" style="left:734px">844 x 442</div>
  <svg style="left:785px;top:6px" width="7" height="5" viewBox="0 0 7 5"><path d="M0.500 0.500l3 3.500 3-3.500" fill="none" stroke="#555" stroke-width="1.500"/></svg>
  <div class="a" style="left:795px;top:1px;width:1px;height:15px;background:#d3d9e2"></div>
  <div class="t" style="left:801px;letter-spacing:-0.4px">1K / 1 sec</div>
  <div class="a" style="left:850px;top:1px;width:1px;height:15px;background:#d3d9e2"></div>
 </div>
</div>
<div class="a" id="props">
 <div class="a" id="propshead">
  <div class="grip" style="left:4px;top:4px;height:12px"></div>
  <div class="tri-d" style="left:14px;top:7px"></div>
  <div class="t" style="left:26px;top:4px;letter-spacing:-0.15px">Properties</div>
  <svg style="left:843px;top:4px" width="14" height="12" viewBox="0 0 14 12"><g fill="#2a3a55"><rect x="0" y="1" width="2" height="2"/><rect x="3" y="1" width="7" height="2"/><rect x="0" y="5" width="2" height="2"/><rect x="3" y="5" width="7" height="2"/><rect x="0" y="9" width="2" height="2"/><rect x="3" y="9" width="5" height="2"/><path d="M8 8h5l-2.500 3z"/></g></svg>
 </div>
 <!-- row 1 (page y 667-687) -->
 <div class="t" style="left:6px;top:31px">Format</div>
 <div class="sel" style="left:44px;top:27px;width:98px"></div><div class="t" style="left:48px;top:32px">None</div>
 <div class="t" style="left:148px;top:31px">Style</div>
 <div class="sel" style="left:176px;top:27px;width:108px"></div><div class="t" style="left:181px;top:32px">None</div>
 <div class="btn" style="left:289px;top:29px;width:42px">CSS</div>
 <div class="t" style="left:348px;top:31px;font-family:'Liberation Serif',serif;font-weight:bold;font-size:14px">B</div>
 <div class="t" style="left:370px;top:31px;font-family:'Liberation Serif',serif;font-weight:bold;font-style:italic;font-size:14px">I</div>
 <svg style="left:390px;top:31px" width="12" height="12" viewBox="0 0 12 12" shape-rendering="crispEdges"><g fill="#000"><rect x="0" y="0" width="11" height="1"/><rect x="0" y="2" width="8" height="1"/><rect x="0" y="4" width="11" height="1"/><rect x="0" y="6" width="8" height="1"/><rect x="0" y="8" width="11" height="1"/><rect x="0" y="10" width="8" height="1"/></g></svg>
 <svg style="left:411px;top:31px" width="12" height="12" viewBox="0 0 12 12" shape-rendering="crispEdges"><g fill="#000"><rect x="0" y="0" width="11" height="1"/><rect x="2" y="2" width="7" height="1"/><rect x="0" y="4" width="11" height="1"/><rect x="2" y="6" width="7" height="1"/><rect x="0" y="8" width="11" height="1"/><rect x="2" y="10" width="7" height="1"/></g></svg>
 <svg style="left:432px;top:31px" width="12" height="12" viewBox="0 0 12 12" shape-rendering="crispEdges"><g fill="#000"><rect x="0" y="0" width="11" height="1"/><rect x="3" y="2" width="8" height="1"/><rect x="0" y="4" width="11" height="1"/><rect x="3" y="6" width="8" height="1"/><rect x="0" y="8" width="11" height="1"/><rect x="3" y="10" width="8" height="1"/></g></svg>
 <svg style="left:453px;top:31px" width="12" height="12" viewBox="0 0 12 12" shape-rendering="crispEdges"><g fill="#000"><rect x="0" y="0" width="11" height="1"/><rect x="0" y="2" width="11" height="1"/><rect x="0" y="4" width="11" height="1"/><rect x="0" y="6" width="11" height="1"/><rect x="0" y="8" width="11" height="1"/><rect x="0" y="10" width="11" height="1"/></g></svg>
 <div class="t" style="left:490px;top:31px">Link</div>
 <div class="sel" style="left:513px;top:27px;width:276px"></div>
 <!-- point to file -->
 <svg style="left:793px;top:30px" width="14" height="14" viewBox="0 0 14 14"><circle cx="7" cy="7" r="5" fill="#fff" stroke="#000" stroke-width="1.200"/><path d="M7 0v4M7 10v4M0 7h4M10 7h4" stroke="#000" stroke-width="1.200"/></svg>
 <!-- folder -->
 <svg style="left:808px;top:30px" width="17" height="14" viewBox="0 0 17 14"><path d="M1 2.500a1 1 0 0 1 1-1h4l1.500 1.500H15a1 1 0 0 1 1 1V12a1 1 0 0 1-1 1H2a1 1 0 0 1-1-1z" fill="#f4d670" stroke="#b08a1c" stroke-width="1"/><path d="M1.500 5h14" stroke="#fbeaa5" stroke-width="1"/></svg>
 <!-- help / quick tag -->
 <svg style="left:842px;top:23px" width="14" height="14" viewBox="0 0 14 14"><circle cx="7" cy="7" r="5.800" fill="#fff" stroke="#000" stroke-width="1.300"/><text x="7" y="10.500" font-family="Liberation Sans, sans-serif" font-weight="bold" font-size="10" text-anchor="middle" fill="#000">?</text></svg>
 <svg style="left:842px;top:38px" width="15" height="13" viewBox="0 0 15 13"><path d="M1 7l5-3 6 3v3l-6 2.500L1 10z" fill="#f0df8a" stroke="#3b3520" stroke-width="1.200"/><path d="M6 8l6-7 2 1.500-6 7-2.500 1z" fill="#e9c84a" stroke="#3b3520" stroke-width="1"/></svg>
 <!-- row 2 (page y 689-709) -->
 <div class="t" style="left:19px;top:54px">Font</div>
 <div class="sel" style="left:44px;top:49px;width:98px"></div><div class="t" style="left:49px;top:53px">Default Font</div>
 <div class="t" style="left:153px;top:54px">Size</div>
 <div class="sel" style="left:176px;top:49px;width:53px"></div><div class="t" style="left:181px;top:53px">None</div>
 <div class="sel dis" style="left:231px;top:49px;width:53px"></div>
 <div class="a" style="left:289px;top:49px;width:20px;height:19px;background:#efefef;border:1px solid #fff;border-right-color:#7a7a7a;border-bottom-color:#7a7a7a"></div>
 <div class="dd" style="left:302px;top:63px;border-width:3px 2.500px 0 2.500px"></div>
 <div class="inp" style="left:313px;top:49px;width:66px;height:19px"></div>
 <svg style="left:391px;top:54px" width="12" height="11" viewBox="0 0 12 11" shape-rendering="crispEdges"><g fill="#00007a"><rect x="0" y="0" width="2" height="2"/><rect x="0" y="4" width="2" height="2"/><rect x="0" y="8" width="2" height="2"/></g><g fill="#000"><rect x="4" y="1" width="7" height="1"/><rect x="4" y="5" width="7" height="1"/><rect x="4" y="9" width="7" height="1"/></g></svg>
 <svg style="left:412px;top:54px" width="12" height="11" viewBox="0 0 12 11" shape-rendering="crispEdges"><g fill="#00007a"><rect x="0" y="0" width="1" height="3"/><rect x="0" y="4" width="2" height="2"/><rect x="0" y="8" width="2" height="2"/></g><g fill="#000"><rect x="4" y="1" width="7" height="1"/><rect x="4" y="5" width="7" height="1"/><rect x="4" y="9" width="7" height="1"/></g></svg>
 <svg style="left:433px;top:54px" width="12" height="11" viewBox="0 0 12 11" shape-rendering="crispEdges"><g fill="#000"><path d="M4 1v5L0 3.500z"/><rect x="3" y="3" width="2" height="1"/><rect x="6" y="1" width="5" height="2"/><rect x="6" y="4" width="5" height="2"/><rect x="0" y="8" width="11" height="1"/><rect x="0" y="10" width="11" height="1"/></g></svg>
 <svg style="left:454px;top:54px" width="12" height="11" viewBox="0 0 12 11" shape-rendering="crispEdges"><g fill="#000"><path d="M2 1v5l3-2.500z"/><rect x="0" y="3" width="3" height="1"/><rect x="6" y="1" width="5" height="2"/><rect x="6" y="4" width="5" height="2"/><rect x="0" y="8" width="11" height="1"/><rect x="0" y="10" width="11" height="1"/></g></svg>
 <div class="t" style="left:477px;top:54px">Target</div>
 <div class="sel dis" style="left:513px;top:49px;width:70px"></div>
 <div class="a" id="propsline"></div>
 <div class="btn" style="left:378px;top:75px;width:103px">Page Properties...</div>
 <div class="btn dis" style="left:489px;top:75px;width:84px">List Item...</div>
 <svg style="left:844px;top:116px" width="9" height="6" viewBox="0 0 9 6"><path d="M0.700 5.500h7.600L4.500 1z" fill="#fff" stroke="#000" stroke-width="1"/></svg>
</div>
<!-- collapse handle between doc and props -->
<div class="a" style="left:411px;top:633px;width:50px;height:7px;background:#e8ecf2;border:1px solid #5a6f88;border-top:0"></div>
<div class="dd" style="left:432px;top:635px;border-width:4px 4px 0 4px"></div>
<div class="a" id="right">
 <div class="phead" style="top:0"><div class="grip" style="left:6px;top:4px;height:12px"></div><div class="tri-r" style="left:17px;top:5px"></div><div class="t">CSS</div></div>
 <div class="phead" style="top:20px"><div class="grip" style="left:6px;top:4px;height:12px"></div><div class="tri-r" style="left:17px;top:5px"></div><div class="t" style="letter-spacing:-0.2px">Application</div></div>
 <div class="phead" style="top:40px"><div class="grip" style="left:6px;top:4px;height:12px"></div><div class="tri-r" style="left:17px;top:5px"></div><div class="t">Tag Inspector</div></div>
 <div class="phead" style="top:60px"><div class="grip" style="left:6px;top:4px;height:12px"></div><div class="tri-d" style="left:15px;top:7px"></div><div class="t">Files</div>
  <svg style="left:390px;top:5px" width="14" height="12" viewBox="0 0 14 12"><g fill="#2a3a55"><rect x="0" y="1" width="2" height="2"/><rect x="3" y="1" width="7" height="2"/><rect x="0" y="5" width="2" height="2"/><rect x="3" y="5" width="7" height="2"/><rect x="0" y="9" width="2" height="2"/><rect x="3" y="9" width="5" height="2"/><path d="M8 8h5l-2.500 3z"/></g></svg>
 </div>
 <div class="a" id="ftabs">
  <div class="a" id="ftab"></div>
  <div class="t" style="left:7px">Files</div>
  <div class="t" style="left:45px;color:#fff">Assets</div>
  <div class="a" style="left:86px;top:4px;width:1px;height:13px;background:#c6cfdc"></div>
  <div class="t" style="left:93px;color:#fff">Snippets</div>
 </div>
 <div class="a" id="fbar"></div>
 <div class="a" id="fcolhead">
  <div class="t" style="left:334px;top:1px;font-weight:bold;font-size:12px">ed</div>
  <div class="a" style="left:394px;top:0;width:2px;height:15px;background:#000"></div>
  <div class="t" style="left:398px;top:1px;font-weight:bold;font-size:12px">C</div>
 </div>
 <div class="a" style="left:1px;top:612px;width:1px;height:88px;background:#000"></div>
 <div class="frow" style="top:165px"><div class="t">11 12:09 PM&nbsp; -</div></div>
 <div class="frow" style="top:183px"><div class="t">11 10:33 ...&nbsp;&nbsp; -</div></div>
 <div class="frow" id="fsel" style="top:201px"><div class="t">11 10:33 ...</div></div>
 <div class="frow" style="top:219px"><div class="t">11 10:33 ...</div></div>
 <div class="frow" style="top:237px"><div class="t">11 10:14 ...</div></div>
 <div class="frow" style="top:255px"><div class="t">11 10:30 ...</div></div>
 <div class="a" style="left:405px;top:99px;width:2px;height:601px;background:#ececec"></div>
 <div class="a" id="hscroll">
  <div class="a" id="hthumb"></div>
  <svg style="left:7px;top:5px" width="5" height="7" viewBox="0 0 5 7"><path d="M5 0v7L0 3.500z" fill="#666"/></svg>
  <svg style="left:393px;top:5px" width="5" height="7" viewBox="0 0 5 7"><path d="M0 0v7l5-3.500z" fill="#666"/></svg>
  <div class="a" style="left:126px;top:4px;width:1px;height:8px;background:#7d7d7d;box-shadow:3px 0 0 #7d7d7d,6px 0 0 #7d7d7d"></div>
 </div>
 <div class="a" id="fstatus">
  <svg style="left:3px;top:3px" width="17" height="17" viewBox="0 0 17 17"><defs><radialGradient id="g2" cx="35%" cy="30%" r="75%"><stop offset="0" stop-color="#a9e3f4"/><stop offset="0.600" stop-color="#3d9fc2"/><stop offset="1" stop-color="#1d6f95"/></radialGradient></defs><circle cx="8" cy="8" r="7.500" fill="url(#g2)"/><path d="M3 5c2-2 5-2 6-.5S7 7 5.500 8 4 11 3 10 2 6.500 3 5z" fill="#5cc466"/><rect x="7.500" y="8.500" width="8.500" height="7.500" fill="#fff" stroke="#7b8a94" stroke-width="1"/><path d="M9 11h5.500M9 13.500h5.500" stroke="#7b8a94" stroke-width="1"/></svg>
  <div class="t" style="left:35px;top:6px;letter-spacing:-0.12px">1 local items selected totalling 8321 bytes.</div>
  <div class="btn" style="left:361px;top:6px;width:41px;height:16px;line-height:14px">Log...</div>
 </div>
</div>
<div class="a" id="magenta"></div>
<div class="a" id="pink"></div>
<div class="a" id="taskbar">
 <!-- start orb -->
 <svg style="left:10px;top:0px" width="34" height="31" viewBox="0 0 34 31"><defs><radialGradient id="orb" cx="50%" cy="85%" r="85%"><stop offset="0" stop-color="#2fb0ee"/><stop offset="0.400" stop-color="#175c9c"/><stop offset="0.850" stop-color="#0b2748"/><stop offset="1" stop-color="#081a30"/></radialGradient><linearGradient id="orbh" x1="0" y1="0" x2="0" y2="1"><stop offset="0" stop-color="#fff" stop-opacity=".6"/><stop offset="1" stop-color="#fff" stop-opacity=".05"/></linearGradient></defs><circle cx="17" cy="16" r="15.500" fill="url(#orb)" stroke="#5f8fb8" stroke-width="1"/><path d="M3 13a14.500 14.500 0 0 1 28 0c-8-3.500-20-3.500-28 0z" fill="url(#orbh)"/><path d="M9.500 9.500c2.500-1.500 4.500-1 6.500.3l-1.500 5.700c-2-1.300-4-1.600-6.500-.3z" fill="#f2642a"/><path d="M17.500 10.300c2 1.200 4 1.500 6.500.2l-1.500 5.700c-2.500 1.300-4.500 1-6.500-.2z" fill="#8fc43c"/><path d="M7.500 16.700c2.500-1.300 4.500-1 6.500.3l-1.500 5.700c-2-1.300-4-1.600-6.500-.3z" fill="#2f9be6"/><path d="M15.500 17.500c2 1.200 4 1.500 6.500.2l-1.500 5.700c-2.500 1.300-4.500 1-6.500-.2z" fill="#fdc12a"/></svg>
 <div class="dots" style="left:64px"></div>
 <!-- show desktop -->
 <svg style="left:77px;top:8px" width="16" height="14" viewBox="0 0 17 16"><rect x="0.500" y="0.500" width="16" height="13" fill="#1f4f92" stroke="#7d94b0" stroke-width="1"/><path d="M1 11c5-1 10-5 15-9v11H1z" fill="#3f86cf"/><rect x="1" y="12" width="15" height="2" fill="#8ea4bd"/></svg>
 <!-- IE -->
 <svg style="left:100px;top:7px" width="17" height="16" viewBox="0 0 18 19"><circle cx="9" cy="10" r="6.300" fill="none" stroke="#2aa6b8" stroke-width="3.500"/><rect x="4" y="8.500" width="11" height="2.500" fill="#2aa6b8"/><rect x="10" y="11" width="8" height="4" fill="#141414"/><path d="M1 16C2 9 12 1 17 2" fill="none" stroke="#e8e8d8" stroke-width="1.300"/></svg>
 <!-- WMP -->
 <svg style="left:123px;top:8px" width="15" height="14" viewBox="0 0 16 17"><rect x="0" y="0" width="16" height="17" fill="#2f8fc9"/><rect x="1" y="1" width="10" height="15" fill="#f08a2c"/><rect x="11" y="1" width="4" height="15" fill="#3aa66a"/><path d="M5 4.500l7 4-7 4z" fill="#fff"/></svg>
 <div class="t" style="left:150px;top:1px;color:#fff;font-weight:bold;font-size:15px;line-height:14px">»</div>
 <div class="dots" style="left:165px"></div>
 <!-- buttons -->
 <div class="tb" style="left:177px"><svg style="left:12px;top:5px" width="17" height="17" viewBox="0 0 17 17"><path d="M1 1h15v12H8l-2.500 3.500V13H1z" fill="#f6cf1c"/><path d="M4 6l3-1 2-2 2 .500 2 2-2.500.500-1.500 3-2.500 1-1-2z" fill="#222"/></svg><div class="t">TweetDeck</div></div>
 <div class="tb" style="left:286px"><svg style="left:12px;top:4px" width="18" height="18" viewBox="0 0 18 18"><circle cx="9" cy="9" r="8" fill="#2c5fc0"/><path d="M9 1a8 8 0 1 0 8 8c0-2-1-3.500-2-4.500.300 2-1 3.500-3 3.500s-3-1.500-2-3.500c-2 .500-3.500 2.500-3 5-2-1-2.500-4-1-6C4 4.500 6 2 9 1z" fill="#f28a1c"/><circle cx="10.500" cy="11" r="3" fill="#fbc845"/></svg><div class="t">test - Moz...</div></div>
 <div class="tb" style="left:395px"><div class="a" style="left:12px;top:4px;width:17px;height:17px;background:linear-gradient(#b8202c,#7a0c14);border:1px solid #5a0a10"></div><div class="t" style="left:16px;top:5px;font-weight:bold;font-size:11px">Fl</div><div class="t">Adobe Fla...</div></div>
 <div class="tb" style="left:504px"><svg style="left:13px;top:4px" width="15" height="19" viewBox="0 0 15 19"><path d="M3 1l11 1-2 16-11-2z" fill="#5aa5f0" stroke="#2a6ac0" stroke-width="1"/><path d="M3 1l3 .300L4 17l-3-.500z" fill="#cfe6ff"/></svg><div class="t">Untitled - ...</div></div>
 <div class="tb act" style="left:613px"><div class="a" style="left:9px;top:4px;width:17px;height:17px;background:linear-gradient(#a3c544,#6b8f1c);border:1px solid #4d6a10"></div><div class="t" style="left:11px;top:5px;font-weight:bold;font-size:10px;letter-spacing:-0.500px">Dw</div><div class="t">Adobe Dr...</div></div>
 <div class="tb" style="left:722px"><svg style="left:12px;top:4px" width="18" height="18" viewBox="0 0 18 18"><circle cx="9" cy="9" r="8" fill="#e9e4d8" stroke="#9a9484" stroke-width="1"/><path d="M5 4l4 4 2-1 3 6-6-3 1-2z" fill="#d8322a"/><path d="M9 8l2 2" stroke="#2a4fb0" stroke-width="2"/></svg><div class="t">Ipswitch ...</div></div>
 <div class="tb" style="left:831px"><svg style="left:13px;top:4px" width="14" height="19" viewBox="0 0 14 19"><path d="M2 1l10 1v16l-10-1z" fill="#2f8fd0" stroke="#1a5f98" stroke-width="1"/><path d="M2 1l3 .300v16.500l-3-.300z" fill="#57b0ea"/></svg><div class="t" style="left:33px">Soulmate</div></div>
 <!-- language bar -->
 <div class="dots" style="left:945px"></div>
 <div class="a" style="left:957px;top:9px;width:15px;height:15px;background:#6e6e6e"></div><div class="t" style="left:958px;top:10px;color:#fff;font-size:11px">EN</div>
 <div class="a" style="left:981px;top:10px;width:13px;height:14px;background:#fbf7c8;border:1px solid #888"></div><div class="t" style="left:984px;top:10px;font-weight:bold;font-size:12px">?</div>
 <div class="a" style="left:1008px;top:7px;width:7px;height:5px;border:1px solid #fff;border-top-width:2px"></div>
 <div class="a" style="left:1005px;top:10px;width:7px;height:5px;border:1px solid #fff;border-top-width:2px;background:#1a1a1a"></div>
 <div class="dd" style="left:1006px;top:21px;border-top-color:#fff"></div>
 <!-- tray -->
 <svg style="left:1159px;top:12px" width="9" height="6" viewBox="0 0 9 6"><path d="M0 6h9L4.500 0z" fill="#fff"/></svg>
 <svg style="left:1175px;top:7px" width="16" height="17" viewBox="0 0 16 17"><rect x="0" y="0" width="15" height="16" fill="#e8e8e8"/><path d="M1 1h4v14H1z" fill="#d8202c"/><path d="M5 8l6-7h4L9 8l6 7h-4z" fill="#d8202c"/><rect x="8" y="10" width="7" height="6" fill="#eee" stroke="#333" stroke-width="1"/></svg>
 <svg style="left:1194px;top:6px" width="18" height="18" viewBox="0 0 18 18"><rect x="1" y="4" width="10" height="8" fill="#3a8de0" stroke="#cfe0f4" stroke-width="1.300"/><rect x="4" y="13" width="4" height="2" fill="#cfe0f4"/><rect x="2" y="15" width="8" height="1.500" fill="#cfe0f4"/><path d="M12 3c2 2 2 5 0 7M14.500 1c3 3 3 8 0 11" fill="none" stroke="#ddd" stroke-width="1.200"/></svg>
 <svg style="left:1213px;top:7px" width="18" height="17" viewBox="0 0 18 17"><path d="M1 6h3l4-4v13l-4-4H1z" fill="#f0f0f0"/><path d="M10.500 5.500c1.500 1.500 1.500 4.500 0 6M13 3.500c2.500 2.500 2.500 7.500 0 10" fill="none" stroke="#3cc43c" stroke-width="1.500"/></svg>
 <div class="t" style="left:1237px;top:8px;color:#fff;font-size:15.500px;line-height:16px">17</div>
 <div class="t" style="left:1255px;top:5px;color:#fff;font-size:11px;line-height:12px">35</div>
 <div class="t" style="left:1255px;top:19px;color:#fff;font-size:8px;font-weight:bold;line-height:9px">PM</div>
</div>
<svg id="countdown" style="left:0;top:0" width="1280" height="800" viewBox="0 0 1280 800">
 <defs><clipPath id="c1"><path d="M8 -60h26v54h-7v10h-7.500v-10h-11.500z"/></clipPath></defs>
 <g font-family="'DejaVu Sans', 'Liberation Sans', sans-serif" font-weight="200" font-size="70" fill="#ff5fa8" stroke="#ff5fa8" stroke-width="3.700" stroke-linejoin="round" stroke-linecap="round">
  <text transform="translate(125.500 396) skewX(-15)" clip-path="url(#c1)">1</text>
  <text transform="translate(170.7 396.5) scale(0.756 1.0) skewX(-15)">2</text>
  <text transform="translate(243.8 395.5) scale(0.8 0.982) skewX(-15)">0</text>
  <text transform="translate(284.4 395.5) scale(0.756 0.982) skewX(-15)">6</text>
  <text transform="translate(365.6 396.5) scale(0.8 1.0) skewX(-15)">2</text>
  <text transform="translate(405.7 396.5) scale(0.878 1.019) skewX(-15)">4</text>
  <text transform="translate(481.0 395.5) scale(0.775 0.982) skewX(-15)">0</text>
  <text transform="translate(523.6 395.5) scale(0.805 0.982) skewX(-15)">8</text>
 </g>
 <g fill="#ff5fa8"><circle cx="229" cy="355" r="3.600"/><circle cx="229" cy="384" r="3.600"/><circle cx="346" cy="355" r="3.600"/><circle cx="346" cy="384" r="3.600"/><circle cx="465.500" cy="355" r="3.600"/><circle cx="465.500" cy="384" r="3.600"/></g>
 <g font-family="'Liberation Sans', sans-serif" font-weight="bold" font-size="29.500" fill="#1fb4c8" stroke="#1fb4c8" stroke-width="1.600" stroke-linejoin="round">
  <text x="138" y="433.500" textLength="59" lengthAdjust="spacingAndGlyphs">Days</text>
  <text x="258" y="433.500" textLength="58" lengthAdjust="spacingAndGlyphs">Hour</text>
  <text x="382" y="433.500" textLength="50" lengthAdjust="spacingAndGlyphs">Min</text>
  <text x="503" y="433.500" textLength="44" lengthAdjust="spacingAndGlyphs">Sec</text>
 </g>
</svg>
</body></html>
